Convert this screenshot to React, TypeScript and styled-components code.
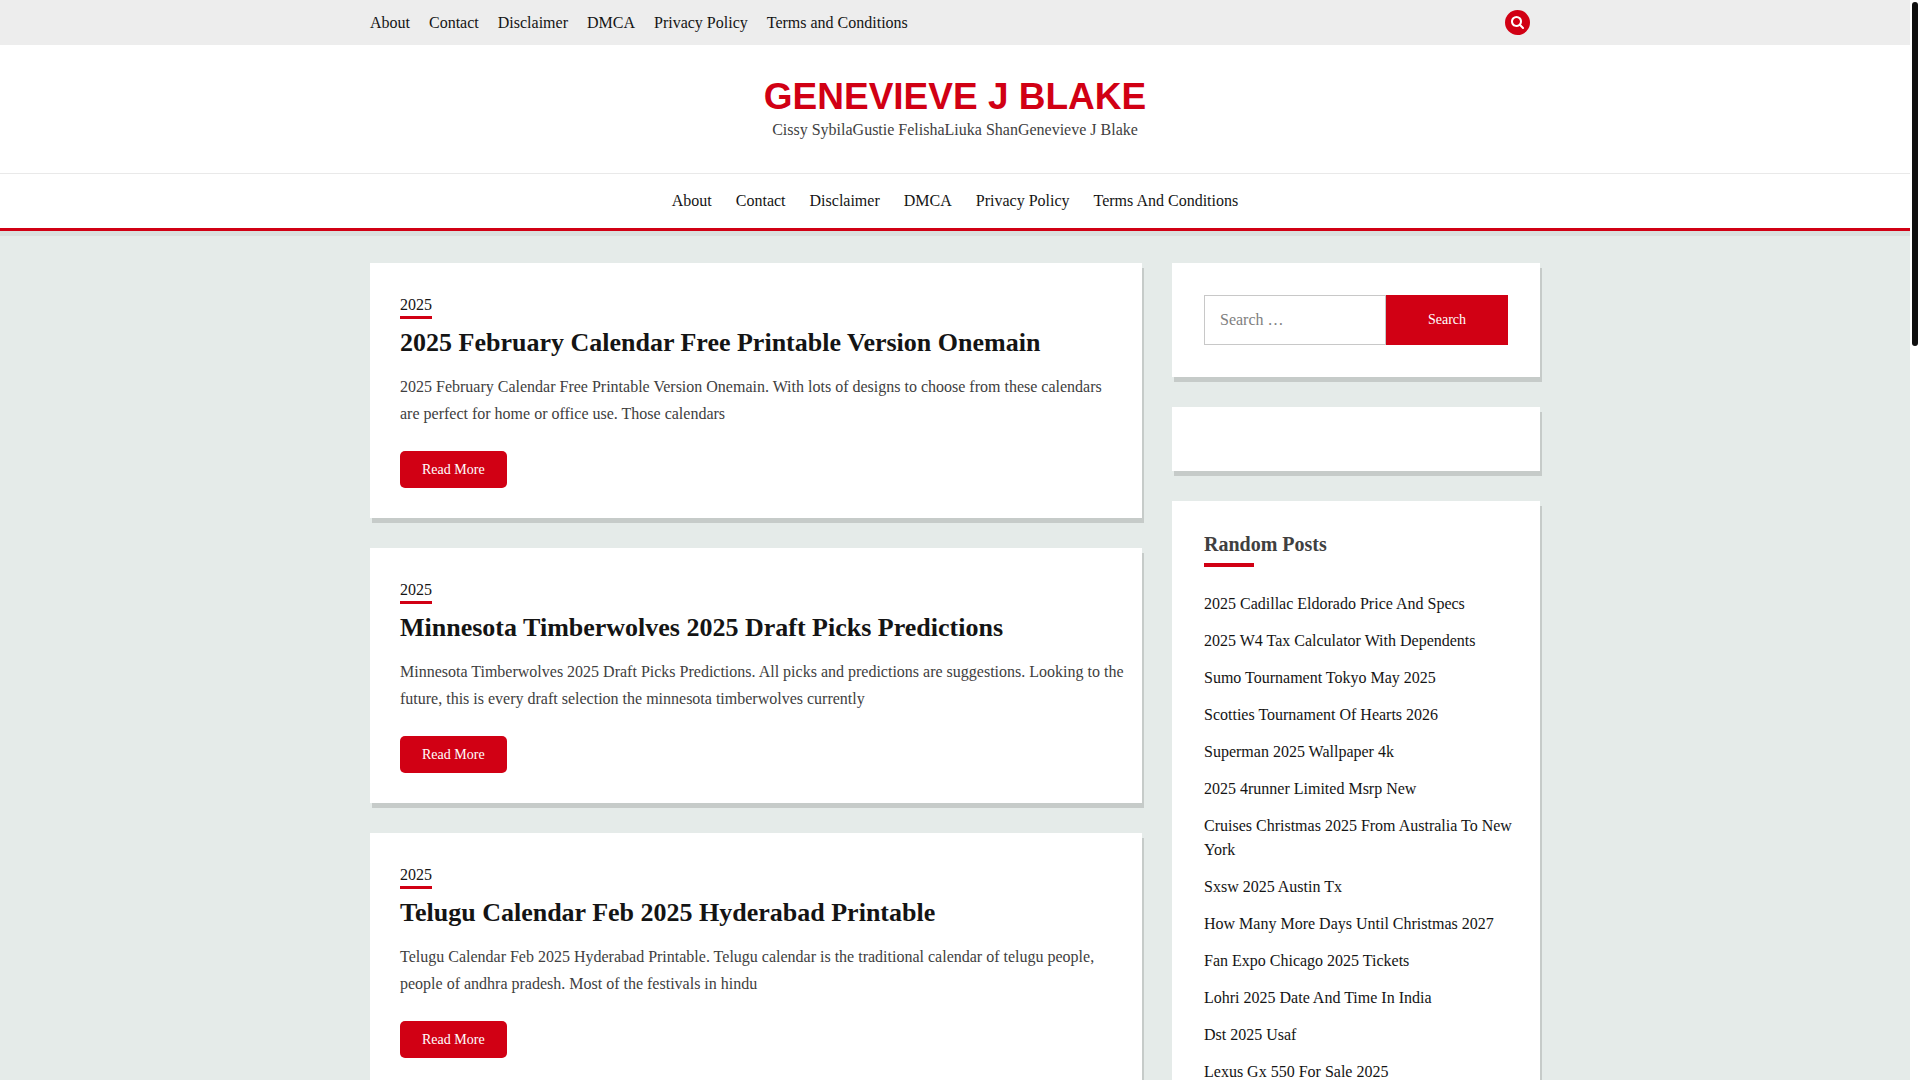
import React from "react";
import styled, { createGlobalStyle } from "styled-components";

const color = {
  accent: "#d10014",
  ink: "#141414",
  body: "#404040",
  page: "#e5ebe9",
  bar: "#ededed",
  rule: "#e9e9e9",
  field: "#c8c8c8",
  shadow: "rgba(20, 20, 20, 0.15)",
};

const Global = createGlobalStyle`
  *, *::before, *::after { box-sizing: border-box; }
  html, body { margin: 0; overflow: hidden; }
  body {
    background: #fff;
    color: ${color.body};
    font-family: "Liberation Serif", "Times New Roman", serif;
    font-size: 16px;
    line-height: 27px;
  }
  a { color: ${color.ink}; text-decoration: none; }
  h1, h2, p, ul { margin: 0; padding: 0; }
  ul { list-style: none; }
`;

const Shell = styled.div`
  display: grid;
  grid-template-columns: minmax(0, 1fr) 10px;
  height: 100vh;
`;

const Page = styled.div`
  overflow-y: auto;
  scrollbar-width: none;
  background: ${color.page};
`;

const ScrollTrack = styled.div`
  display: flex;
  padding: 2px;
  background: #fff;
`;

const ScrollThumb = styled.div`
  width: 6px;
  height: 32%;
  border-radius: 3px;
  background: #0f0f0f;
`;

const Container = styled.div`
  width: 100%;
  max-width: 1170px;
  margin: 0 auto;
`;

const TopBar = styled.div`
  background: ${color.bar};
`;

const TopBarInner = styled(Container)`
  display: flex;
  align-items: center;
  justify-content: space-between;
  min-height: 45px;
  padding-right: 10px;
`;

const Menu = styled.ul<{ $gap: number }>`
  display: flex;
  flex-wrap: wrap;
  justify-content: center;
  gap: 0 ${(p) => p.$gap}px;
`;

const SearchToggle = styled.button`
  display: flex;
  align-items: center;
  justify-content: center;
  width: 25px;
  height: 25px;
  padding: 0;
  border: 0;
  border-radius: 50%;
  background: ${color.accent};
  color: #fff;
  cursor: pointer;
`;

const Header = styled.header`
  background: #fff;
  border-bottom: 3px solid ${color.accent};
  box-shadow: 0 5px 0 rgba(20, 20, 20, 0.05);
`;

const Branding = styled.div`
  padding: 30px 0 32px;
  text-align: center;
`;

const SiteTitle = styled.h1`
  font-family: "Liberation Sans", Arial, sans-serif;
  font-size: 37px;
  font-weight: 700;
  line-height: 44px;
  text-transform: uppercase;

  a { color: ${color.accent}; }
`;

const Tagline = styled.p`
  line-height: 22px;
`;

const MainNav = styled.nav`
  border-top: 1px solid ${color.rule};
  line-height: 54px;
`;

const Layout = styled(Container)`
  display: grid;
  grid-template-columns: minmax(0, 1fr) 368px;
  align-items: start;
  gap: 30px;
  padding: 32px 0;
`;

const Stack = styled.div`
  display: grid;
  grid-template-columns: minmax(0, 1fr);
  gap: 30px;
`;

const Card = styled.article`
  padding: 30px 14px 30px 30px;
  background: #fff;
  box-shadow: 2px 5px 0 ${color.shadow};
`;

const Category = styled.a`
  display: block;
  width: fit-content;
  border-bottom: 3px solid ${color.accent};
  line-height: 23px;
`;

const PostTitle = styled.h2`
  margin: 7px 0 13px;
  font-size: 26px;
  line-height: 34px;
`;

const Excerpt = styled.p`
  white-space: pre-line;
`;

const ReadMore = styled.a`
  display: block;
  width: fit-content;
  margin-top: 24px;
  padding: 0 22px;
  border-radius: 5px;
  background: ${color.accent};
  color: #fff;
  font-size: 14px;
  line-height: 37px;
`;

const Widget = styled.section`
  min-height: 64px;
  padding: 32px;
  background: #fff;
  box-shadow: 2px 5px 0 ${color.shadow};
`;

const WidgetTitle = styled.h2`
  margin-bottom: 25px;
  font-size: 20px;
  line-height: 23px;

  &::after {
    content: "";
    display: block;
    width: 50px;
    height: 4px;
    margin-top: 7px;
    background: ${color.accent};
  }
`;

const SearchForm = styled.form`
  display: flex;
`;

const SearchInput = styled.input`
  flex: 1;
  min-width: 0;
  height: 50px;
  padding: 0 15px;
  border: 1px solid ${color.field};
  background: #fff;
  color: ${color.body};
  font: inherit;

  &::placeholder { color: #808080; }
`;

const SearchSubmit = styled.button`
  width: 122px;
  border: 0;
  background: ${color.accent};
  color: #fff;
  font-family: inherit;
  font-size: 14px;
  cursor: pointer;
`;

const PostList = styled.ul`
  display: grid;
  gap: 13px;
  margin-right: -8px;
  line-height: 24px;
`;

const topLinks = ["About", "Contact", "Disclaimer", "DMCA", "Privacy Policy", "Terms and Conditions"];
const navLinks = ["About", "Contact", "Disclaimer", "DMCA", "Privacy Policy", "Terms And Conditions"];

const posts = [
  {
    title: "2025 February Calendar Free Printable Version Onemain",
    excerpt:
      "2025 February Calendar Free Printable Version Onemain. With lots of designs to choose from these calendars\nare perfect for home or office use. Those calendars",
  },
  {
    title: "Minnesota Timberwolves 2025 Draft Picks Predictions",
    excerpt:
      "Minnesota Timberwolves 2025 Draft Picks Predictions. All picks and predictions are suggestions. Looking to the\nfuture, this is every draft selection the minnesota timberwolves currently",
  },
  {
    title: "Telugu Calendar Feb 2025 Hyderabad Printable",
    excerpt:
      "Telugu Calendar Feb 2025 Hyderabad Printable. Telugu calendar is the traditional calendar of telugu people,\npeople of andhra pradesh. Most of the festivals in hindu",
  },
];

const randomPosts = [
  "2025 Cadillac Eldorado Price And Specs",
  "2025 W4 Tax Calculator With Dependents",
  "Sumo Tournament Tokyo May 2025",
  "Scotties Tournament Of Hearts 2026",
  "Superman 2025 Wallpaper 4k",
  "2025 4runner Limited Msrp New",
  "Cruises Christmas 2025 From Australia To New York",
  "Sxsw 2025 Austin Tx",
  "How Many More Days Until Christmas 2027",
  "Fan Expo Chicago 2025 Tickets",
  "Lohri 2025 Date And Time In India",
  "Dst 2025 Usaf",
  "Lexus Gx 550 For Sale 2025",
];

function LinkItems({ items }: { items: string[] }) {
  return (
    <>
      {items.map((item) => (
        <li key={item}>
          <a href="#">{item}</a>
        </li>
      ))}
    </>
  );
}

function SearchIcon() {
  return (
    <svg width="13" height="13" viewBox="0 128 1664 1664" fill="currentColor" aria-hidden="true">
      <path d="M1152 832q0-185-131.5-316.5t-316.5-131.5-316.5 131.5-131.5 316.5 131.5 316.5 316.5 131.5 316.5-131.5 131.5-316.5zm512 832q0 52-38 90t-90 38q-54 0-90-38l-343-342q-179 124-399 124-143 0-273.5-55.5t-225-150-150-225-55.5-273.5 55.5-273.5 150-225 225-150 273.5-55.5 273.5 55.5 225 150 150 225 55.5 273.5q0 220-124 399l343 343q37 37 37 90z" />
    </svg>
  );
}

export default function App() {
  return (
    <Shell>
      <Global />
      <Page>
        <TopBar>
          <TopBarInner>
            <nav aria-label="Top">
              <Menu $gap={19}>
                <LinkItems items={topLinks} />
              </Menu>
            </nav>
            <SearchToggle type="button" aria-label="Open search">
              <SearchIcon />
            </SearchToggle>
          </TopBarInner>
        </TopBar>
        <Header>
          <Branding>
            <SiteTitle>
              <a href="#">Genevieve J Blake</a>
            </SiteTitle>
            <Tagline>Cissy SybilaGustie FelishaLiuka ShanGenevieve J Blake</Tagline>
          </Branding>
          <MainNav aria-label="Main">
            <Menu $gap={24}>
              <LinkItems items={navLinks} />
            </Menu>
          </MainNav>
        </Header>
        <Layout>
          <Stack as="main">
            {posts.map((post) => (
              <Card key={post.title}>
                <Category href="#">2025</Category>
                <PostTitle>
                  <a href="#">{post.title}</a>
                </PostTitle>
                <Excerpt>{post.excerpt}</Excerpt>
                <ReadMore href="#">Read More</ReadMore>
              </Card>
            ))}
          </Stack>
          <Stack as="aside">
            <Widget>
              <SearchForm role="search" onSubmit={(e) => e.preventDefault()}>
                <SearchInput type="search" aria-label="Search for:" placeholder="Search …" />
                <SearchSubmit type="submit">Search</SearchSubmit>
              </SearchForm>
            </Widget>
            <Widget />
            <Widget>
              <WidgetTitle>Random Posts</WidgetTitle>
              <PostList>
                <LinkItems items={randomPosts} />
              </PostList>
            </Widget>
          </Stack>
        </Layout>
      </Page>
      <ScrollTrack aria-hidden="true">
        <ScrollThumb />
      </ScrollTrack>
    </Shell>
  );
}
